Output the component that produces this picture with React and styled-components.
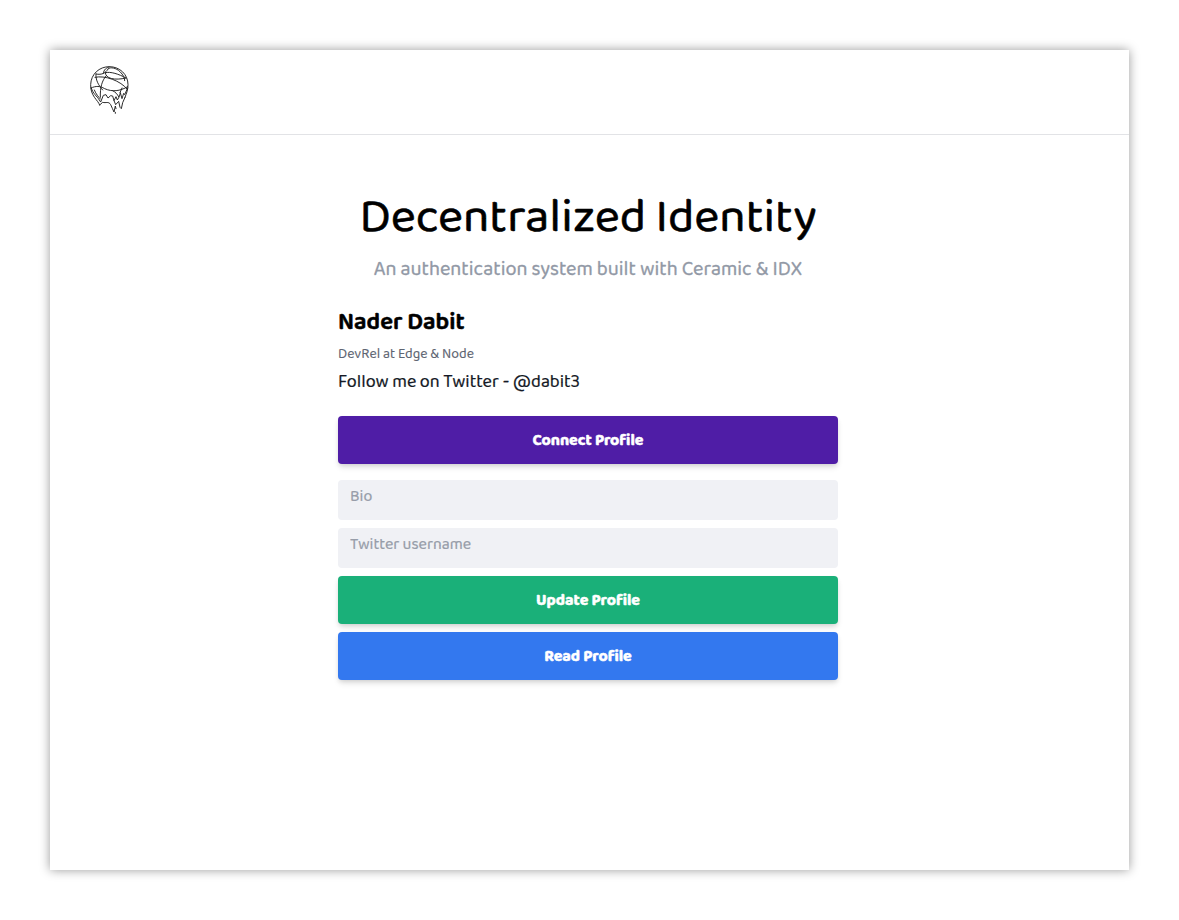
import React from 'react';
import styled, { createGlobalStyle } from 'styled-components';

const GlobalStyle = createGlobalStyle`
  *, *::before, *::after { box-sizing: border-box; }
  body {
    margin: 0;
    background: #fff;
    font-family: "Baloo 2", "Noto Sans", "Open Sans", sans-serif;
  }
`;

const Page = styled.div`
  height: 920px;
  padding: 50px;
  overflow: hidden;
`;

const Window = styled.div`
  height: 820px;
  background: #fff;
  box-shadow: 0 0 10px rgba(0, 0, 0, 0.4);
`;

const Header = styled.header`
  height: 85px;
  padding: 16px 40px;
  border-bottom: 1px solid #e2e3e6;
`;

const LogoArt = styled.svg`
  display: block;
  width: 40px;
  height: 50px;
  fill: none;
  stroke: #222;
  stroke-width: 2.9;
  stroke-linecap: round;
  stroke-linejoin: round;
`;

const Main = styled.main`
  display: flex;
  justify-content: center;
  padding: 48px 3px 0 0;
`;

const Column = styled.div`
  display: flex;
  flex-direction: column;
  width: 500px;
`;

const Title = styled.h1`
  margin: 0;
  height: 66px;
  line-height: 70px;
  text-align: center;
  white-space: nowrap;
  font-size: 48px;
  font-weight: 400;
  color: #000;
  -webkit-text-stroke: 0.6px currentColor;
`;

const Subtitle = styled.p`
  margin: 0;
  height: 40px;
  line-height: 41px;
  text-align: center;
  white-space: nowrap;
  font-size: 20px;
  color: #9299a6;
  -webkit-text-stroke: 0.3px currentColor;
`;

const Name = styled.h2`
  margin: 16px 0 0;
  height: 34px;
  line-height: 36px;
  font-size: 24px;
  font-weight: 600;
  color: #000;
  -webkit-text-stroke: 0.5px currentColor;
`;

const Role = styled.p`
  margin: 3px 0 0;
  height: 24px;
  line-height: 24px;
  font-size: 14px;
  color: #5e6572;
  -webkit-text-stroke: 0.1px currentColor;
`;

const Follow = styled.p`
  margin: 1px 0 0;
  height: 30px;
  line-height: 30px;
  font-size: 18px;
  color: #151a26;
  -webkit-text-stroke: 0.2px currentColor;
`;

const Button = styled.button`
  height: 48px;
  margin: ${(p) => p.$margin || '8px 0 0'};
  padding: 2px 0 0;
  border: 0;
  border-radius: 4px;
  background: ${(p) => p.$color};
  box-shadow: 0 4px 6px -1px rgba(0, 0, 0, 0.12), 0 2px 4px -1px rgba(0, 0, 0, 0.1);
  color: #fff;
  font: 700 16px/46px "Baloo 2", "Noto Sans", "Open Sans", sans-serif;
  -webkit-text-stroke: 0.5px currentColor;
`;

const Field = styled.input`
  height: 40px;
  margin-top: ${(p) => p.$gap};
  padding: 0 12px 8px;
  border: 0;
  border-radius: 4px;
  outline: none;
  background: #f0f1f5;
  font: 400 16px "Baloo 2", "Noto Sans", "Open Sans", sans-serif;

  &::placeholder {
    color: #979da9;
    opacity: 1;
    -webkit-text-stroke: 0.2px currentColor;
  }
`;

function Logo() {
  return (
    <LogoArt viewBox="18 18 120 150" role="img" aria-label="Ceramic">
      <path d="M47 135 C42 120 19 108 20 74 C21 42 46 20 76 20 C107 20 132 43 132 74 C132 92 127 100 123 112" />
      <path d="M36 42 C54 46 66 38 72 27 C79 20 97 24 108 35 C118 45 122 53 122 62" />
      <path d="M58 40 C60 28 66 24 76 21" />
      <path d="M64 38 C64 56 92 62 126 54" />
      <path d="M64 38 C80 34 104 42 126 54" />
      <path d="M36 42 C34 58 43 76 56 90" />
      <path d="M33 52 C62 45 110 62 130 88" />
      <path d="M66 48 C54 62 48 82 49 112" />
      <path d="M21 84 C36 77 48 78 62 86 C84 96 108 94 131 80" />
      <path d="M22 84 C27 102 39 108 46 120 L50 126 L58 106 L66 104 L72 114 L80 107 L86 108 L90 122 L96 110 L100 120 L106 110 L109 98 L114 116 L119 100 L122 104 L131 84" />
      <path d="M31 90 C36 103 44 111 49 117" />
      <path d="M47 135 L56 127 C66 130 74 123 80 134 C84 142 86 148 90 156 L94 138 L96 146 M94 157 V160 M90 122 L95 134 L104 124 L108 142 L112 146 L116 128 L123 112" />
      <path d="M86 92 C94 96 100 102 104 110 M114 84 L108 98" />
    </LogoArt>
  );
}

export default function App() {
  return (
    <>
      <GlobalStyle />
      <Page>
        <Window>
          <Header>
            <Logo />
          </Header>
          <Main>
            <Column>
              <Title>Decentralized Identity</Title>
              <Subtitle>An authentication system built with Ceramic &amp; IDX</Subtitle>
              <Name>Nader Dabit</Name>
              <Role>DevRel at Edge &amp; Node</Role>
              <Follow>Follow me on Twitter - @dabit3</Follow>
              <Button $color="#4f1da6" $margin="19px 0 0">Connect Profile</Button>
              <Field $gap="16px" placeholder="Bio" />
              <Field $gap="8px" placeholder="Twitter username" />
              <Button $color="#1ab079">Update Profile</Button>
              <Button $color="#3378ef">Read Profile</Button>
            </Column>
          </Main>
        </Window>
      </Page>
    </>
  );
}
